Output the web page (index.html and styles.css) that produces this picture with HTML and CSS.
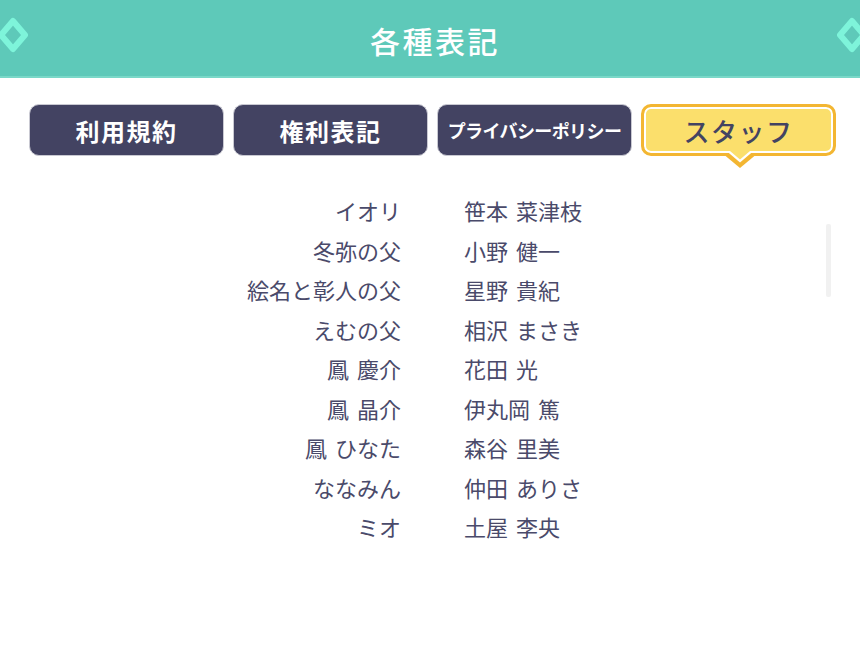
FILE: index.html
```html
<!DOCTYPE html>
<html lang="ja">
<head>
<meta charset="utf-8">
<link rel="stylesheet" href="styles.css">
</head>
<body>
<header class="header">
  <svg class="diamond diamond-left" width="34" height="36" viewBox="0 0 34 36"><polygon points="17,4 29,18 17,32 5,18" fill="none" stroke="#7ef4da" stroke-width="6" stroke-linejoin="round"/></svg>
  <h1 class="title">各種表記</h1>
  <svg class="diamond diamond-right" width="34" height="36" viewBox="0 0 34 36"><polygon points="17,4 29,18 17,32 5,18" fill="none" stroke="#7ef4da" stroke-width="6" stroke-linejoin="round"/></svg>
</header>
<nav class="tabs">
  <div class="tab">利用規約</div>
  <div class="tab">権利表記</div>
  <div class="tab tab-small">プライバシーポリシー</div>
  <div class="tab tab-active">スタッフ
    <svg class="pointer" width="36" height="18" viewBox="0 0 36 18"><polygon points="0,2 36,2 18,17" fill="#f3b632"/><polygon points="4.5,0 31.5,0 18,11.5" fill="#ffffff"/><polygon points="8,0 28,0 18,8.5" fill="#fbdf6c"/></svg>
  </div>
</nav>
<main class="staff">
  <div class="role">イオリ</div><div class="name">笹本 菜津枝</div>
  <div class="role">冬弥の父</div><div class="name">小野 健一</div>
  <div class="role">絵名と彰人の父</div><div class="name">星野 貴紀</div>
  <div class="role">えむの父</div><div class="name">相沢 まさき</div>
  <div class="role">鳳 慶介</div><div class="name">花田 光</div>
  <div class="role">鳳 晶介</div><div class="name">伊丸岡 篤</div>
  <div class="role">鳳 ひなた</div><div class="name">森谷 里美</div>
  <div class="role">ななみん</div><div class="name">仲田 ありさ</div>
  <div class="role">ミオ</div><div class="name">土屋 李央</div>
</main>
<div class="scrollbar"></div>
</body>
</html>
```

FILE: styles.css
```css
html, body {
  margin: 0;
  padding: 0;
  background: #ffffff;
  font-family: "Noto Sans CJK JP", "Noto Sans", sans-serif;
  width: 860px;
  height: 654px;
  overflow: hidden;
  position: relative;
}
.header {
  height: 76px;
  background: #5ec9b9;
  border-bottom: 2px solid #7ad8c8;
  display: flex;
  align-items: center;
  justify-content: center;
  position: relative;
}
.title {
  margin: 4px 0 0 10px;
  color: #ffffff;
  font-size: 30px;
  font-weight: 500;
  letter-spacing: 2.5px;
  line-height: 1;
}
.diamond {
  position: absolute;
  top: 17px;
}
.diamond-left { left: -4px; }
.diamond-right { left: 835px; }
.tabs {
  display: flex;
  gap: 9px;
  padding: 26px 0 0 29px;
}
.tab {
  width: 195px;
  height: 52px;
  box-sizing: border-box;
  border-radius: 10px;
  background: #434362;
  border: 1px solid #c9c9d2;
  color: #ffffff;
  font-size: 24px;
  font-weight: 700;
  display: flex;
  align-items: center;
  justify-content: center;
  letter-spacing: 1.5px;
  position: relative;
}
.tab-small {
  font-size: 18px;
  letter-spacing: -0.6px;
}
.tab-active {
  background: #fbdf6c;
  border: 3px solid #f3b632;
  box-shadow: inset 0 0 0 2px #ffffff;
  color: #434362;
  font-weight: 500;
  font-size: 26px;
  letter-spacing: 1.5px;
}
.pointer {
  position: absolute;
  left: 78px;
  top: 44px;
}
.staff {
  display: grid;
  grid-template-columns: 401px 1fr;
  column-gap: 63px;
  margin-top: 35px;
  color: #4a4a6a;
  font-size: 22px;
  line-height: 39.5px;
  word-spacing: 3px;
}
.role {
  text-align: right;
}
.scrollbar {
  position: absolute;
  left: 826px;
  top: 224px;
  width: 5px;
  height: 73px;
  background: #f1f1f1;
  border-radius: 2px;
}
```
